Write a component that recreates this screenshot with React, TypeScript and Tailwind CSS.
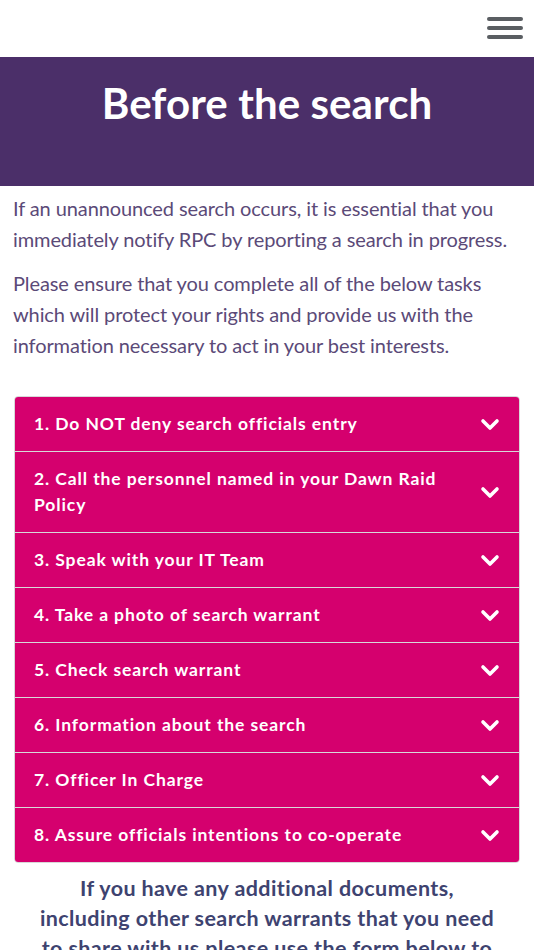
import React from "react";

const items = [
  "1. Do NOT deny search officials entry",
  "2. Call the personnel named in your Dawn Raid Policy",
  "3. Speak with your IT Team",
  "4. Take a photo of search warrant",
  "5. Check search warrant",
  "6. Information about the search",
  "7. Officer In Charge",
  "8. Assure officials intentions to co-operate",
];

function Chevron() {
  return (
    <svg width="20" height="13" viewBox="0 0 20 13" className="shrink-0">
      <path d="M3 3 L10 10 L17 3" fill="none" stroke="white" strokeWidth="3.6" strokeLinecap="round" strokeLinejoin="round" />
    </svg>
  );
}

export default function App() {
  return (
    <div className="w-[534px] h-[950px] overflow-hidden bg-white" style={{ fontFamily: "Lato, 'Open Sans', sans-serif" }}>
      <header className="h-[57px] flex items-start justify-end pr-[11px] pt-[17px]">
        <div className="flex flex-col gap-[5.5px] w-[36px]">
          <span className="block h-[3.5px] rounded-full bg-[#5a5e62]" />
          <span className="block h-[3.5px] rounded-full bg-[#5a5e62]" />
          <span className="block h-[3.5px] rounded-full bg-[#5a5e62]" />
        </div>
      </header>
      <section className="h-[129px] bg-[#4b2f69] flex justify-center pt-[20px]">
        <h1 className="text-white font-bold text-[42px] leading-[52px] tracking-[0.1px]">Before the search</h1>
      </section>
      <div className="px-[13px] pt-[7px] text-[#5b4a78] text-[20px] leading-[31px] tracking-[-0.1px]">
        <p>If an unannounced search occurs, it is essential that you immediately notify RPC by reporting a search in progress.</p>
        <p className="mt-[13px]">Please ensure that you complete all of the below tasks which will protect your rights and provide us with the information necessary to act in your best interests.</p>
      </div>
      <div className="mx-[14px] mt-[35px] border border-[#d8d8d8] rounded-[4px] overflow-hidden">
        {items.map((t, i) => (
          <div
            key={i}
            className={`bg-[#d5006e] flex items-center justify-between pl-[19px] pr-[19px] py-[14px] ${i > 0 ? "border-t border-[#d8d8d8]" : ""}`}
          >
            <span className="text-white font-bold text-[17.5px] leading-[26px] tracking-[0.9px] pr-[30px]">{t}</span>
            <Chevron />
          </div>
        ))}
      </div>
      <p className="mt-[10px] px-[34px] text-center text-[#3e4370] font-bold text-[21.5px] leading-[30px] tracking-[0.4px]">
        If you have any additional documents, including other search warrants that you need to share with us please use the form below to upload them.
      </p>
    </div>
  );
}
